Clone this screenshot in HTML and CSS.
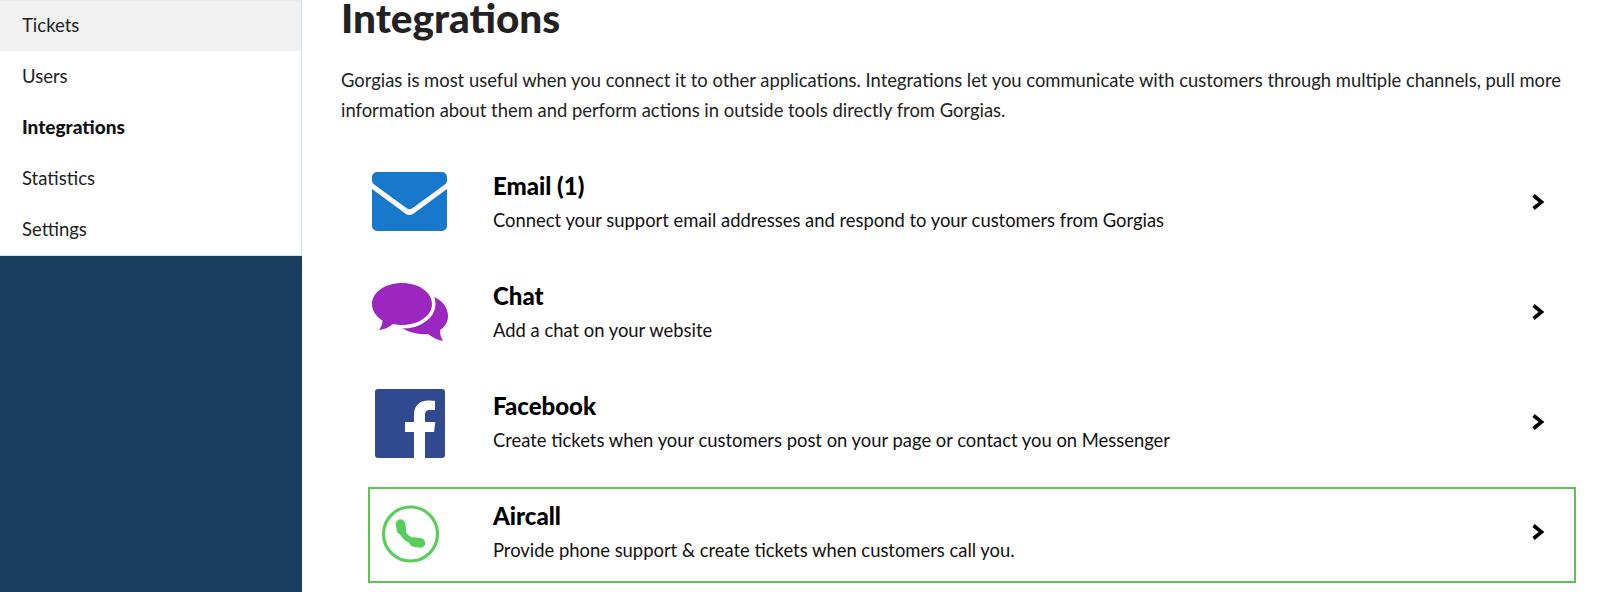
FILE: index.html
```html
<!DOCTYPE html>
<html lang="en">
<head>
<meta charset="utf-8">
<title>Integrations</title>
<link rel="stylesheet" href="styles.css">
</head>
<body>
<div class="app">
  <aside class="sidebar">
    <nav class="menu">
      <a class="menu-item active">Tickets</a>
      <a class="menu-item">Users</a>
      <a class="menu-item current">Integrations</a>
      <a class="menu-item">Statistics</a>
      <a class="menu-item">Settings</a>
    </nav>
  </aside>
  <main class="content">
    <h1 class="title">Integrations</h1>
    <p class="intro">Gorgias is most useful when you connect it to other applications. Integrations let you communicate with customers through multiple channels, pull more information about them and perform actions in outside tools directly from Gorgias.</p>
    <ul class="list">
      <li class="row">
        <div class="icon">
          <svg width="76" height="76" viewBox="0 0 76 76"><path fill="#1778cc" d="M5 8H70a5 5 0 0 1 5 5V17a4 4 0 0 1-1.500 3L40 44.500q-2.500 1.500-5 0L1.500 20a4 4 0 0 1-1.500-3V13a5 5 0 0 1 5-5Z"/><path fill="#1778cc" d="M0 25 34 50q3.500 2 7 0L75 25V62a5 5 0 0 1-5 5H5a5 5 0 0 1-5-5Z"/></svg>
        </div>
        <div class="text"><div class="name">Email (1)</div><div class="desc">Connect your support email addresses and respond to your customers from Gorgias</div></div>
        <svg class="chev" width="14" height="18" viewBox="0 0 14 18"><path d="M2.500 2.500 10.500 9 2.500 15.500" fill="none" stroke="#000" stroke-width="3.600"/></svg>
      </li>
      <li class="row">
        <div class="icon">
          <svg width="76" height="76" viewBox="0 0 76 76"><path fill="#9c27c0" d="M60 22C70 26 76 33 76 42 76 48 73 53 68 56 68 60 69 64 71 67 65 66 60 63 56 60 46 61 36 58 28 53L40 30Z"/><path fill="#9c27c0" stroke="#fff" stroke-width="7" paint-order="stroke" d="M30 9c17 0 30 9.500 30 21S47 51 30 51c-3 0-6-.3-9-1-4 3.500-9 5.500-14 6 2-3 3.500-6 3.500-9.500C4 42.500 0 36.500 0 30 0 18.500 13 9 30 9Z"/></svg>
        </div>
        <div class="text"><div class="name">Chat</div><div class="desc">Add a chat on your website</div></div>
        <svg class="chev" width="14" height="18" viewBox="0 0 14 18"><path d="M2.500 2.500 10.500 9 2.500 15.500" fill="none" stroke="#000" stroke-width="3.600"/></svg>
      </li>
      <li class="row">
        <div class="icon">
          <svg width="76" height="76" viewBox="0 0 76 76"><rect x="3" y="5" width="70" height="69" rx="3" fill="#30498f"/><path fill="#fff" d="M53 74V48h9l1.300-10H53v-7c0-3 1-5 5-5h5V17c-1 0-3-.4-7-.4-8 0-14 5-14 14V38h-9v10h9v26Z"/></svg>
        </div>
        <div class="text"><div class="name">Facebook</div><div class="desc">Create tickets when your customers post on your page or contact you on Messenger</div></div>
        <svg class="chev" width="14" height="18" viewBox="0 0 14 18"><path d="M2.500 2.500 10.500 9 2.500 15.500" fill="none" stroke="#000" stroke-width="3.600"/></svg>
      </li>
      <li class="row highlight">
        <div class="icon">
          <svg width="76" height="76" viewBox="0 0 76 76"><circle cx="38.500" cy="40" r="27" fill="none" stroke="#59cd5b" stroke-width="3.200"/><path d="M29 32Q30 46 47 48.500" fill="none" stroke="#59cd5b" stroke-width="6"/><path d="M28.500 30 29.500 36M42 48 48.500 49" fill="none" stroke="#59cd5b" stroke-width="9.500" stroke-linecap="round"/></svg>
        </div>
        <div class="text"><div class="name">Aircall</div><div class="desc">Provide phone support &amp; create tickets when customers call you.</div></div>
        <svg class="chev" width="14" height="18" viewBox="0 0 14 18"><path d="M2.500 2.500 10.500 9 2.500 15.500" fill="none" stroke="#000" stroke-width="3.600"/></svg>
      </li>
    </ul>
  </main>
</div>
</body>
</html>
```
FILE: styles.css
```css
* { box-sizing: border-box; }
html, body { margin: 0; height: 100%; overflow: hidden; background: #fff; }
body { font-family: "Lato", "Noto Sans", sans-serif; color: #1c1c1c; }
.app { display: flex; height: 592px; }
.sidebar { width: 302px; flex: none; background: #1a3f5e; }
.menu { display: flex; flex-direction: column; background: #fff; border-right: 1px solid #cfe0ee; border-bottom: 1px solid #cfe0ee; }
.menu-item { height: 51px; padding: 0 0 2px 22px; display: flex; align-items: center; font-size: 18.500px; color: #222; }
.menu-item.active { background: #f1f1f1; box-shadow: inset 0 1px 0 #e4ebf1; }
.menu-item.current { font-weight: 900; font-size: 19px; color: #111; }
.content { flex: 1; min-width: 0; padding: 0 22px 0 39px; }
.title { margin: 0; font-size: 40.500px; line-height: 36px; font-weight: 900; color: #222; }
.intro { margin: 29px 0 0; font-size: 18.400px; line-height: 30px; color: #222; }
.list { list-style: none; margin: 32px 0 0; padding: 0; }
.row { display: flex; align-items: center; height: 96px; margin-left: 27px; padding: 0 29px 6px 2px; margin-bottom: 14px; border: 2px solid transparent; }
.row.highlight { border-color: #5cc552; }
.icon { width: 76px; flex: none; margin-right: 45px; }
.icon svg { display: block; }
.text { flex: 1; min-width: 0; margin-bottom: 1px; }
.name { font-size: 24px; line-height: 30px; font-weight: 900; color: #000; }
.desc { font-size: 18.400px; line-height: 24px; color: #111; margin-top: 7px; }
.chev { flex: none; display: block; }
```
